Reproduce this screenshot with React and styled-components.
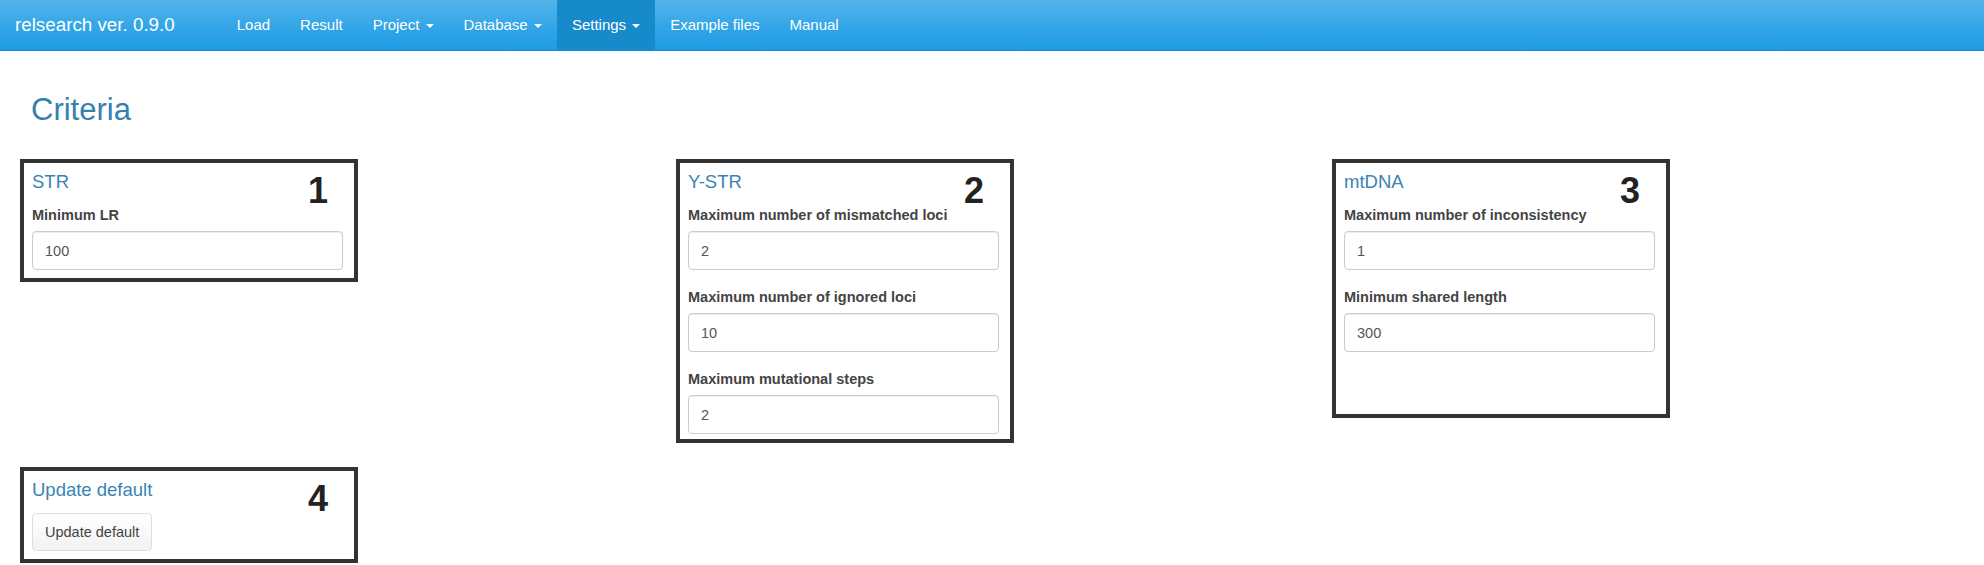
import styled, { createGlobalStyle } from "styled-components";

const GlobalStyle = createGlobalStyle`
  html, body {
    margin: 0;
    padding: 0;
    background: #fff;
  }
  body {
    font-family: "Liberation Sans", Arial, sans-serif;
    color: #555;
  }
  *, *::before, *::after {
    box-sizing: border-box;
  }
`;

const Navbar = styled.nav`
  display: flex;
  height: 51px;
  background: linear-gradient(#54b4eb, #2fa4e7 60%, #1d9ce5);
  border-bottom: 1px solid #178acc;
`;

const Brand = styled.a`
  padding: 0 15px;
  font-size: 18.8px;
  line-height: 50px;
  color: #fff;
  text-decoration: none;
`;

const NavList = styled.ul`
  display: flex;
  margin: 0 0 0 32px;
  padding: 0;
  list-style: none;
`;

const NavItem = styled.li`
  padding: 15px;
  font-size: 15px;
  line-height: 20px;
  color: #fff;
  white-space: nowrap;
  background: ${(p) => (p.$active ? "#178acc" : "transparent")};
`;

const Caret = styled.span`
  display: inline-block;
  width: 0;
  height: 0;
  margin-left: 2px;
  vertical-align: middle;
  border-top: 4px solid #fff;
  border-left: 4px solid transparent;
  border-right: 4px solid transparent;
`;

const Main = styled.main`
  padding: 42px 0 0 20px;
`;

const Title = styled.h2`
  margin: 0 0 33px 11px;
  font-size: 31px;
  line-height: 33px;
  font-weight: 400;
  color: #3580b0;
`;

const Row = styled.div`
  display: grid;
  grid-template-columns: repeat(3, 656px);
  align-items: start;
  margin-top: ${(p) => p.$gap || 0}px;
`;

const Box = styled.section`
  position: relative;
  width: 338px;
  height: ${(p) => p.$h}px;
  border: 4px solid #333;
  padding: 9px 11px 0 8px;
`;

const BoxTitle = styled.h4`
  margin: 0 0 13px;
  font-size: 18.5px;
  line-height: 20px;
  font-weight: 400;
  color: #3a84b4;
`;

const Number = styled.span`
  position: absolute;
  top: 10px;
  left: 284px;
  font-size: 36px;
  line-height: 36px;
  font-weight: 700;
  color: #222;
`;

const Field = styled.div`
  margin-bottom: 17px;
`;

const Label = styled.label`
  display: block;
  margin-bottom: 6px;
  font-size: 14.5px;
  line-height: 20px;
  font-weight: 700;
  color: #444;
`;

const Input = styled.input`
  display: block;
  width: 100%;
  height: 39px;
  padding: 0 12px;
  border: 1px solid #ccc;
  border-radius: 4px;
  box-shadow: inset 0 1px 1px rgba(0, 0, 0, 0.075);
  font-family: inherit;
  font-size: 14.5px;
  color: #555;
  background: #fff;
`;

const Button = styled.button`
  height: 38px;
  padding: 0 12px;
  border: 1px solid #ddd;
  border-radius: 4px;
  background: linear-gradient(#ffffff, #f2f2f2);
  font-family: inherit;
  font-size: 14.5px;
  color: #444;
`;

const navItems = [
  { label: "Load" },
  { label: "Result" },
  { label: "Project", menu: true },
  { label: "Database", menu: true },
  { label: "Settings", menu: true, active: true },
  { label: "Example files" },
  { label: "Manual" },
];

const panels = [
  {
    title: "STR",
    n: 1,
    h: 123,
    fields: [["Minimum LR", "100"]],
  },
  {
    title: "Y-STR",
    n: 2,
    h: 284,
    fields: [
      ["Maximum number of mismatched loci", "2"],
      ["Maximum number of ignored loci", "10"],
      ["Maximum mutational steps", "2"],
    ],
  },
  {
    title: "mtDNA",
    n: 3,
    h: 259,
    fields: [
      ["Maximum number of inconsistency", "1"],
      ["Minimum shared length", "300"],
    ],
  },
];

const App = () => {
  return (
    <>
      <GlobalStyle />
      <Navbar>
        <Brand>relsearch ver. 0.9.0</Brand>
        <NavList>
          {navItems.map((item) => (
            <NavItem key={item.label} $active={item.active}>
              {item.label}
              {item.menu && (
                <>
                  {" "}
                  <Caret />
                </>
              )}
            </NavItem>
          ))}
        </NavList>
      </Navbar>
      <Main>
        <Title>Criteria</Title>
        <Row>
          {panels.map((p) => (
            <Box key={p.title} $h={p.h}>
              <BoxTitle>{p.title}</BoxTitle>
              <Number>{p.n}</Number>
              {p.fields.map(([label, value]) => (
                <Field key={label}>
                  <Label>{label}</Label>
                  <Input type="text" defaultValue={value} />
                </Field>
              ))}
            </Box>
          ))}
        </Row>
        <Row $gap={24}>
          <Box $h={96}>
            <BoxTitle>Update default</BoxTitle>
            <Number>4</Number>
            <Button>Update default</Button>
          </Box>
        </Row>
      </Main>
    </>
  );
};

export default App;
